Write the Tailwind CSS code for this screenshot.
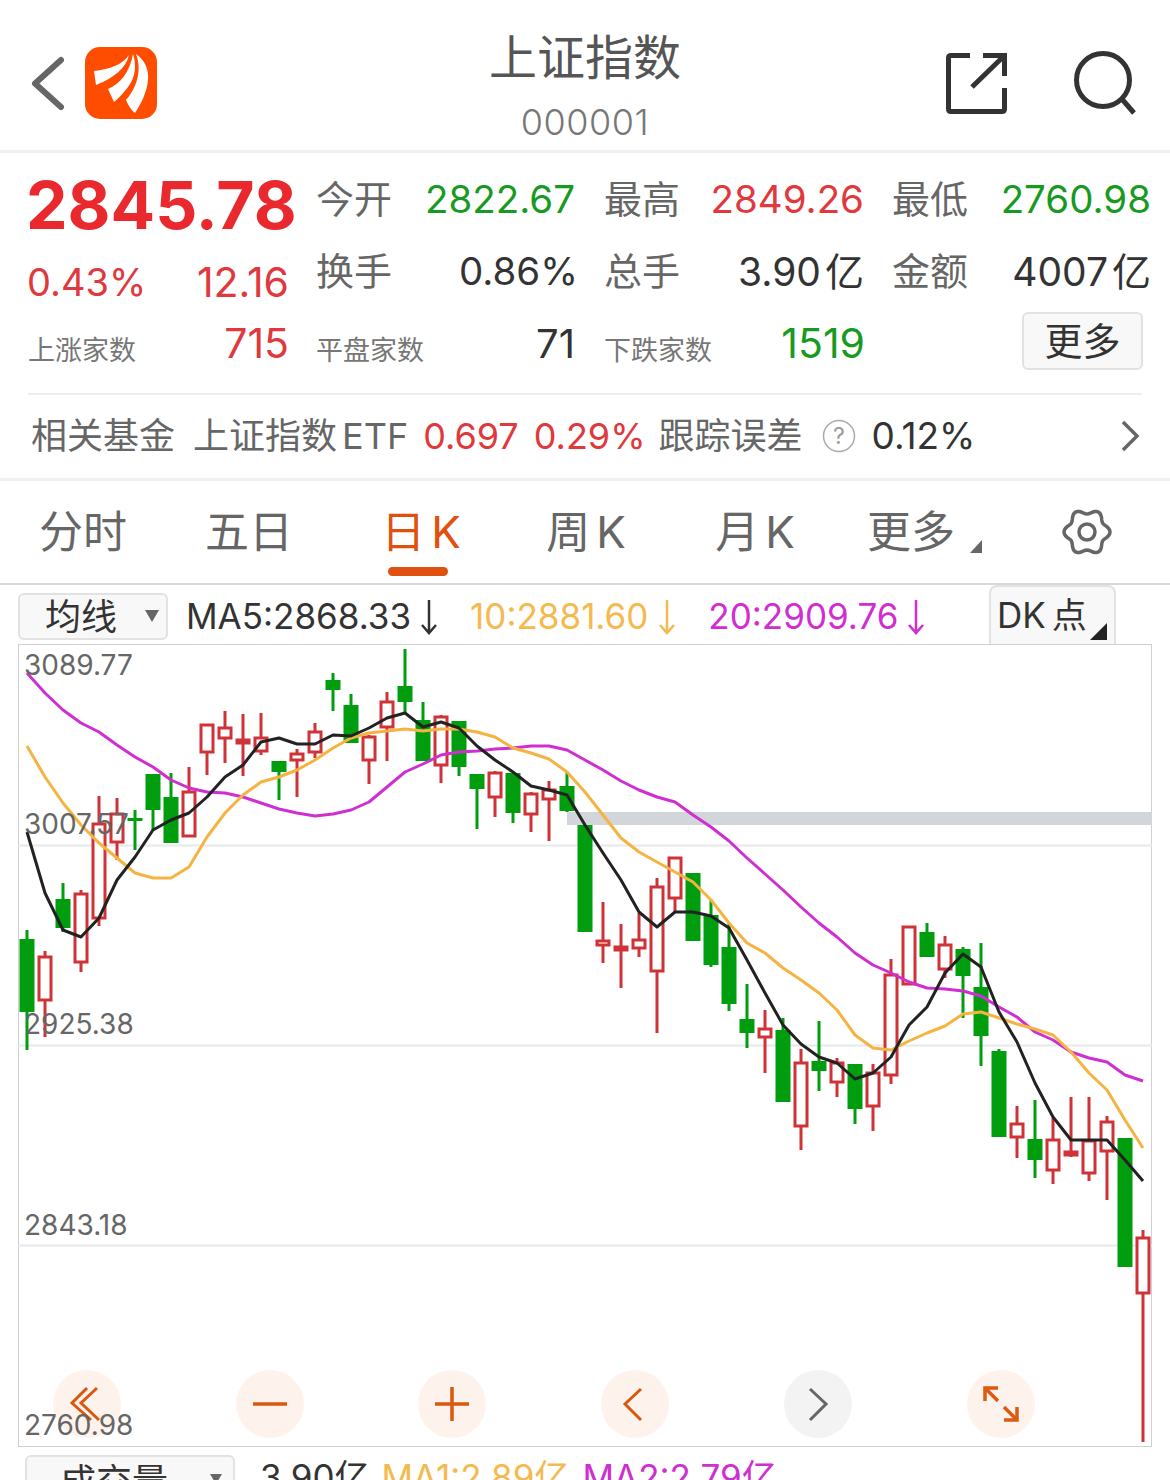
<!DOCTYPE html>
<html lang="zh-CN">
<head>
    <meta charset="UTF-8">
    <meta name="viewport" content="width=device-width, initial-scale=1.0">
    <title>上证指数</title>
    <script src="https://cdn.jsdelivr.net/npm/@tailwindcss/browser@4"></script>
</head>
<body class="bg-white h-[1480px] overflow-hidden font-['Inter','Noto_Sans_CJK_SC',sans-serif]">
    <!-- Header -->
    <header class="relative h-[153px] border-b-[3px] border-[#f0f0f0] flex flex-col items-center">
        <svg class="absolute left-0 top-0" width="170" height="150" viewBox="0 0 170 150" fill="none">
            <path d="M61 60L35 83.500L61 107" stroke="#666" stroke-width="6" stroke-linecap="round" stroke-linejoin="round"/>
            <rect x="85" y="47" width="72" height="72" rx="15" fill="#ff4d00"/>
            <path d="M94 71C110 69 122 65 129 55C126 68 114 78 96 85Z" fill="#fff"/>
            <path d="M133 54C137 66 135 78 128 87C124 92 119 98 114 102L108 89C120 84 130 72 133 54Z" fill="#fff"/>
            <path d="M136 54C145 60 149 70 148 80C147 92 141 104 135 113C131 110 128 105 126 100C135 90 143 72 136 54Z" fill="#fff"/>
        </svg>
        <div class="text-[48px] leading-none text-[#555] mt-[34px]">上证指数</div>
        <div class="text-[36px] leading-none text-[#777] mt-[22px] font-light tracking-[0.5px]">000001</div>
        <svg class="absolute left-[930px] top-0" width="240" height="150" viewBox="930 0 240 150" fill="none" stroke="#333" stroke-width="5">
            <path d="M970 55.500H951Q948.500 55.500 948.500 58V109Q948.500 111.500 951 111.500H1002Q1004.500 111.500 1004.500 109V88M983 55.500H1004.500V76"/>
            <path d="M972 87L1005 55"/>
            <circle cx="1103" cy="80" r="26.500"/>
            <path d="M1121 98L1134 113"/>
        </svg>
    </header>

    <!-- Quote stats -->
    <section class="h-[240px] pl-[28px] pt-[10px]">
        <div class="grid grid-cols-[288px_288px_288px_259px] grid-rows-[72px_72px_73px] text-[38.5px] leading-none">
            <div class="flex items-center text-[66px] font-bold text-[#e9292d] pt-[12px] ml-[-2px]">2845.78</div>
            <div class="flex items-center justify-between pr-[29px]"><span class="text-[38px] text-[#666]">今开</span><span class="text-[#179a1f]">2822.67</span></div>
            <div class="flex items-center justify-between pr-[28px]"><span class="text-[38px] text-[#666]">最高</span><span class="text-[#e0383c]">2849.26</span></div>
            <div class="flex items-center justify-between"><span class="text-[38px] text-[#666]">最低</span><span class="text-[#179a1f]">2760.98</span></div>

            <div class="flex items-center justify-between pr-[27px] pt-[22px] text-[#e0383c]"><span class="text-[38px] ml-[-1px]">0.43%</span><span class="text-[41px]">12.16</span></div>
            <div class="flex items-center justify-between pr-[26px]"><span class="text-[38px] text-[#666]">换手</span><span class="text-[#333]">0.86%</span></div>
            <div class="flex items-center justify-between pr-[28px]"><span class="text-[38px] text-[#666]">总手</span><span class="text-[39px] text-[#333]">3.90<span class="ml-[4px]">亿</span></span></div>
            <div class="flex items-center justify-between"><span class="text-[38px] text-[#666]">金额</span><span class="text-[39px] text-[#333]">4007<span class="ml-[4px]">亿</span></span></div>

            <div class="flex items-center justify-between pr-[27px]"><span class="text-[27px] text-[#777] pt-[14px]">上涨家数</span><span class="text-[41px] text-[#e0383c]">715</span></div>
            <div class="flex items-center justify-between pr-[29px]"><span class="text-[27px] text-[#777] pt-[14px]">平盘家数</span><span class="text-[40px] text-[#333]">71</span></div>
            <div class="flex items-center justify-between pr-[27px]"><span class="text-[27px] text-[#777] pt-[14px]">下跌家数</span><span class="text-[41px] text-[#179a1f]">1519</span></div>
            <div class="flex items-center justify-end pr-[8px] pb-[6px]"><button class="w-[121px] h-[58px] bg-[#f8f8f8] border-2 border-[#e2e2e2] rounded-[6px] text-[38px] text-[#333] flex items-center justify-center">更多</button></div>
        </div>
    </section>

    <!-- Related fund -->
    <section class="mx-[28px] h-[85px] pb-[2px] border-t-2 border-[#eeeeee] flex items-center text-[36px] leading-none relative">
        <span class="ml-[3px] text-[#666]">相关基金</span>
        <span class="ml-[18px] text-[#666]">上证指数<span class="ml-[5px]">ETF</span></span>
        <span class="ml-[15px] text-[#e0383c]">0.697</span>
        <span class="ml-[15px] text-[#e0383c]">0.29%</span>
        <span class="ml-[13px] text-[#666]">跟踪误差</span>
        <svg class="ml-[19px]" width="34" height="34" viewBox="0 0 34 34" fill="none"><circle cx="17" cy="17" r="15.500" stroke="#aaa" stroke-width="1.500"/><text x="17" y="25" text-anchor="middle" font-size="23" fill="#999">?</text></svg>
        <span class="ml-[16px] text-[37px] text-[#333]">0.12%</span>
        <svg class="absolute right-[1px] top-[23px]" width="22" height="36" viewBox="0 0 22 36" fill="none"><path d="M4 4L18 18L4 32" stroke="#666" stroke-width="3.500"/></svg>
    </section>

    <!-- Period tabs -->
    <nav class="relative h-[107px] border-t-[3px] border-b-2 border-t-[#f0f0f0] border-b-[#d8d8d8] grid grid-cols-[166px_166px_178px_152px_186px_126px_196px] text-[44px] text-[#666] leading-none">
        <div class="flex items-center justify-center">分时</div>
        <div class="flex items-center justify-center">五日</div>
        <div class="relative flex items-center justify-center text-[#e0500f]">日<span class="ml-[6px]">K</span><span class="absolute left-[56px] top-[86px] w-[60px] h-[9px] rounded-full bg-[#e0500f]"></span></div>
        <div class="flex items-center justify-center">周<span class="ml-[6px]">K</span></div>
        <div class="flex items-center justify-center">月<span class="ml-[6px]">K</span></div>
        <div class="relative flex items-center justify-center">更多<span class="absolute left-[122px] top-[59px] w-0 h-0 border-l-[12px] border-l-transparent border-b-[13px] border-b-[#666]"></span></div>
        <div class="flex items-center pl-[88px]"><svg id="gear" width="50" height="50" viewBox="-25 -25 50 50" fill="none" stroke="#666" stroke-width="3.500"><path id="gearPath"/><circle r="8"/></svg></div>
    </nav>

    <!-- MA legend -->
    <div class="relative h-[59px] pt-[4px] flex items-center leading-none text-[35px]">
        <div class="relative ml-[18px] w-[150px] h-[47px] bg-[#f8f8f8] border-2 border-[#e2e2e2] rounded-[6px] flex items-center pl-[25px] text-[#333] text-[36px]">均线<span class="absolute left-[125px] top-[15px] w-0 h-0 border-x-[7px] border-x-transparent border-t-[12px] border-t-[#666]"></span></div>
        <span class="ml-[18px] text-[#333]">MA5:2868.33</span>
        <svg class="ml-[8px]" width="20" height="36" viewBox="0 0 20 36" fill="none" stroke="#333" stroke-width="2.500"><path d="M10 1V34M3 26L10 34L17 26"/></svg>
        <span class="ml-[31px] text-[#f5b94f]">10:2881.60</span>
        <svg class="ml-[9px]" width="20" height="36" viewBox="0 0 20 36" fill="none" stroke="#f5b94f" stroke-width="2.500"><path d="M10 1V34M3 26L10 34L17 26"/></svg>
        <span class="ml-[31px] text-[#cf2fd0]">20:2909.76</span>
        <svg class="ml-[8px]" width="20" height="36" viewBox="0 0 20 36" fill="none" stroke="#cf2fd0" stroke-width="2.500"><path d="M10 1V34M3 26L10 34L17 26"/></svg>
        <div class="absolute left-[989px] top-0 w-[127px] h-[59px] bg-[#f8f8f8] border-2 border-b-0 border-[#e2e2e2] rounded-t-[8px] flex items-center pl-[6px] text-[#333] text-[35px]">DK<span class="ml-[6px]">点</span><span class="absolute left-[99px] top-[36px] w-0 h-0 border-l-[17px] border-l-transparent border-b-[17px] border-b-[#222]"></span></div>
    </div>

    <!-- K-line chart -->
    <div class="relative ml-[18px] w-[1134px] h-[803px] border border-[#d0d0d0]">
        <svg id="chart" class="absolute left-[-1px] top-[-1px]" width="1134" height="803" viewBox="18 644 1134 803"></svg>
        <span class="absolute left-[5px] top-[6px] text-[28px] leading-none text-[#666]">3089.77</span>
        <span class="absolute left-[5px] top-[165px] text-[28px] leading-none text-[#666]">3007.57</span>
        <span class="absolute left-[5px] top-[365px] text-[28px] leading-none text-[#666]">2925.38</span>
        <span class="absolute left-[5px] top-[566px] text-[28px] leading-none text-[#666]">2843.18</span>

        <button class="absolute left-[34px] top-[725px] w-[68px] h-[68px] rounded-full bg-[#fef3ec] flex items-center justify-center"><svg width="36" height="36" viewBox="0 0 36 36" fill="none" stroke="#d9570f" stroke-width="3"><path d="M18 2L3 17L22 34M28 2L12 17L30 34"/></svg></button>
        <button class="absolute left-[217px] top-[725px] w-[68px] h-[68px] rounded-full bg-[#fef3ec] flex items-center justify-center"><svg width="36" height="36" viewBox="0 0 36 36" fill="none" stroke="#d9570f" stroke-width="3.500"><path d="M1 18H35"/></svg></button>
        <button class="absolute left-[399px] top-[725px] w-[68px] h-[68px] rounded-full bg-[#fef3ec] flex items-center justify-center"><svg width="36" height="36" viewBox="0 0 36 36" fill="none" stroke="#d9570f" stroke-width="3.500"><path d="M1 18H35M18 1V35"/></svg></button>
        <button class="absolute left-[582px] top-[725px] w-[68px] h-[68px] rounded-full bg-[#fef3ec] flex items-center justify-center"><svg width="36" height="36" viewBox="0 0 36 36" fill="none" stroke="#d9570f" stroke-width="3"><path d="M24 3L8 18L24 34"/></svg></button>
        <button class="absolute left-[765px] top-[725px] w-[68px] h-[68px] rounded-full bg-[#f3f3f3] flex items-center justify-center"><svg width="36" height="36" viewBox="0 0 36 36" fill="none" stroke="#666" stroke-width="3"><path d="M10 3L26 18L10 34"/></svg></button>
        <button class="absolute left-[948px] top-[725px] w-[68px] h-[68px] rounded-full bg-[#fef3ec] flex items-center justify-center"><svg width="36" height="36" viewBox="0 0 36 36" fill="none" stroke="#dd5a12" stroke-width="3.500"><path d="M2 15V2H15M2 2L15 15M34 21V34H21M34 34L21 21"/></svg></button>
        <span class="absolute left-[5px] top-[766px] text-[28px] leading-none text-[#666]">2760.98</span>
    </div>

    <!-- Volume legend, cut off by the screen edge -->
    <div class="relative h-[33px] overflow-hidden flex leading-none text-[35px]">
        <div class="ml-[25px] mt-[8px] w-[210px] h-[60px] bg-[#f8f8f8] border-2 border-[#e2e2e2] rounded-[6px] relative pl-[33px] pt-[7px] text-[36px] text-[#333]">成交量<span class="absolute left-[183px] top-[17px] w-0 h-0 border-x-[6px] border-x-transparent border-t-[10px] border-t-[#666]"></span></div>
        <span class="ml-[25px] mt-[13px] text-[#333]">3.90亿</span>
        <span class="ml-[12px] mt-[13px] text-[#f5b94f]">MA1:2.89亿</span>
        <span class="ml-[13px] mt-[13px] text-[#cf2fd0]">MA2:2.79亿</span>
    </div>

    <script>
        // [wick top, wick bottom, body top, body bottom, u=red hollow / f=red filled / d=green]
        const candles = [
            [930,1050,939,1012,'d'],[951,1037,956,1001,'u'],[883,932,899,928,'d'],[890,972,893,963,'u'],[796,926,823,919,'u'],
            [798,860,813,843,'u'],[810,850,818,821,'d'],[774,830,774,810,'d'],[773,843,797,843,'d'],[767,835,791,837,'u'],
            [724,775,724,753,'u'],[711,763,727,739,'u'],[714,776,739,744,'f'],[713,755,737,752,'u'],[761,800,761,772,'d'],
            [749,797,753,761,'u'],[723,758,731,753,'u'],[673,711,680,690,'d'],[694,743,705,743,'d'],[735,784,736,761,'u'],
            [692,761,701,728,'u'],[649,713,686,702,'d'],[702,761,720,761,'d'],[715,783,716,766,'u'],[721,776,721,767,'d'],
            [774,829,774,789,'d'],[771,817,772,798,'u'],[773,823,773,813,'d'],[792,832,793,815,'u'],[781,841,789,800,'u'],
            [772,812,786,811,'d'],[825,932,825,932,'d'],[902,963,940,946,'u'],[924,988,946,951,'f'],[913,957,939,949,'u'],
            [878,1033,886,972,'u'],[857,912,857,899,'u'],[873,941,873,941,'d'],[900,967,915,965,'d'],[923,1011,947,1004,'d'],
            [984,1048,1019,1033,'d'],[1010,1073,1028,1038,'u'],[1018,1102,1030,1102,'d'],[1049,1150,1062,1127,'u'],[1021,1091,1061,1071,'d'],
            [1058,1097,1062,1083,'u'],[1064,1124,1064,1109,'d'],[1064,1131,1072,1107,'u'],[959,1084,974,1076,'u'],[926,985,926,985,'u'],
            [923,957,932,957,'d'],[936,978,944,970,'u'],[947,1018,949,976,'d'],[943,1066,987,1036,'d'],[1049,1137,1051,1137,'d'],
            [1106,1158,1123,1138,'u'],[1100,1178,1139,1160,'d'],[1118,1184,1139,1171,'u'],[1097,1157,1151,1156,'u'],[1097,1181,1140,1174,'u'],
            [1116,1200,1121,1152,'u'],[1138,1267,1138,1267,'d'],[1230,1442,1237,1294,'u']
        ];
        const ma5 = [832,893,930,937,918,880,857,830,820,813,797,777,765,742,738,744,744,735,736,728,718,713,727,722,728,746,760,772,786,790,795,825,853,880,912,927,912,912,916,928,960,993,1025,1044,1057,1063,1079,1073,1057,1025,1007,973,954,967,1012,1042,1083,1117,1140,1140,1140,1160,1181];
        const ma10 = [746,777,803,825,843,858,873,878,878,867,837,813,795,782,777,770,760,748,738,733,731,729,731,729,729,732,737,748,753,759,772,792,815,838,852,862,872,882,900,923,943,953,968,980,993,1010,1035,1048,1050,1041,1033,1026,1014,1012,1018,1024,1029,1035,1052,1073,1090,1120,1148];
        const ma20 = [673,693,710,723,732,745,757,767,780,788,792,793,797,803,809,813,816,814,810,802,787,772,764,755,752,751,749,748,746,746,750,760,770,781,790,797,802,815,827,841,858,874,890,907,923,937,953,965,973,982,988,989,991,996,1007,1017,1032,1040,1052,1058,1062,1075,1081];

        const xAt = i => 27 + 18 * i;
        let out = '';
        for (const y of [845.5, 1045.5, 1245.5]) out += `<rect x="18" y="${y - 1}" width="1134" height="2" fill="#e6e8ea"/>`;
        out += '<rect x="567" y="812" width="585" height="13" fill="#d2d5da"/>';
        candles.forEach((c, i) => {
            const x = xAt(i);
            if (c[4] === 'd') {
                out += `<rect x="${x - 1.500}" y="${c[0]}" width="3" height="${c[1] - c[0]}" fill="#009e0f"/>`;
                out += `<rect x="${x - 7.500}" y="${c[2]}" width="15" height="${c[3] - c[2]}" fill="#009e0f"/>`;
            } else {
                out += `<rect x="${x - 1.500}" y="${c[0]}" width="3" height="${c[1] - c[0]}" fill="#cf3237"/>`;
                const fill = c[4] === 'f' ? '#cf3237' : '#fff';
                out += `<rect x="${x - 6}" y="${c[2] + 1}" width="12" height="${c[3] - c[2] - 2}" fill="${fill}" stroke="#cf3237" stroke-width="3"/>`;
            }
        });
        const line = (data, color) => `<polyline fill="none" stroke="${color}" stroke-width="3" stroke-linejoin="round" points="${data.map((y, i) => xAt(i) + ',' + y).join(' ')}"/>`;
        out += line(ma20, '#cf2fd0') + line(ma10, '#f5b342') + line(ma5, '#222');
        document.getElementById('chart').innerHTML = out;

        // six-lobed settings gear
        let d = '';
        for (let a = 0; a < 360; a += 5) {
            const t = a * Math.PI / 180, r = 20.500 + 2.500 * Math.cos(6 * t);
            d += (a ? 'L' : 'M') + (r * Math.cos(t)).toFixed(2) + ' ' + (r * Math.sin(t)).toFixed(2);
        }
        document.getElementById('gearPath').setAttribute('d', d + 'Z');
    </script>
</body>
</html>
